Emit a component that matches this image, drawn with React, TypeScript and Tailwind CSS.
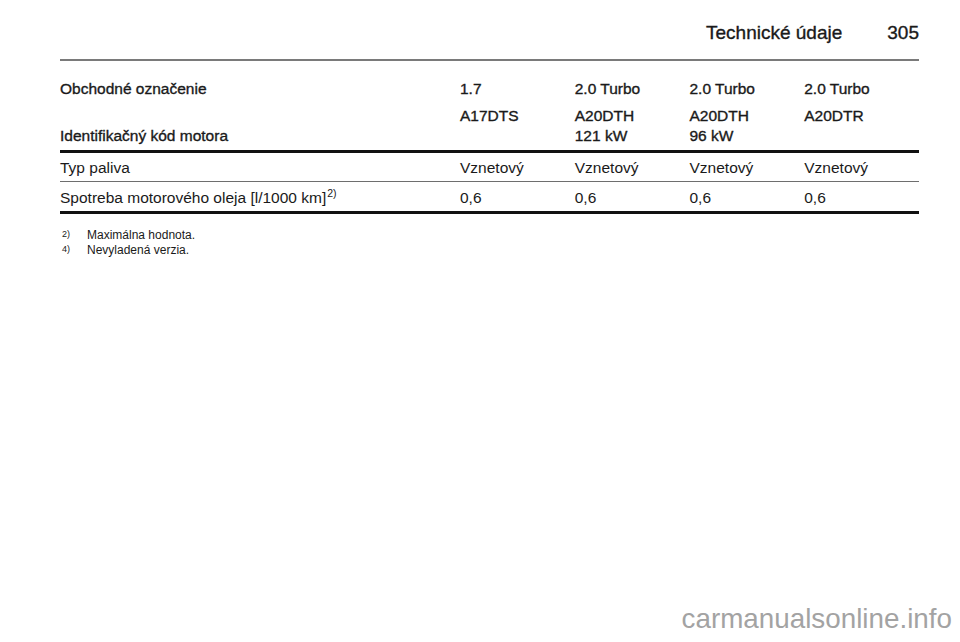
const columns = [
  { name: '1.7', code: ['A17DTS'], fuel: 'Vznetový', oil: '0,6' },
  { name: '2.0 Turbo', code: ['A20DTH', '121 kW'], fuel: 'Vznetový', oil: '0,6' },
  { name: '2.0 Turbo', code: ['A20DTH', '96 kW'], fuel: 'Vznetový', oil: '0,6' },
  { name: '2.0 Turbo', code: ['A20DTR'], fuel: 'Vznetový', oil: '0,6' },
];

const footnotes = [
  { mark: '2)', text: 'Maximálna hodnota.' },
  { mark: '4)', text: 'Nevyladená verzia.' },
];

const bold = '[-webkit-text-stroke:0.35px_#1a1a1a]';

export default function App() {
  return (
    <div
      className="flex flex-col h-[642px] w-[960px] bg-white text-[#1a1a1a] overflow-hidden"
      style={{ fontFamily: '"Liberation Sans", Arial, sans-serif' }}
    >
      <div className="pl-[60px] pr-[41px]">
        {/* page header */}
        <div className={`flex justify-end items-center pt-[21px] h-[45px] text-[19px] leading-[24px] ${bold}`}>
          <span>Technické údaje</span>
          <span className="ml-[45px]">305</span>
        </div>
        <div className="mt-[14px] h-[1.5px] bg-[#7a7a7a]" />

        {/* table */}
        <div className="text-[15.5px] leading-[20px]">
          <div className={`grid grid-cols-[400px_repeat(4,1fr)] pt-[18px] ${bold}`}>
            <div>Obchodné označenie</div>
            {columns.map((c, i) => (
              <div key={i}>{c.name}</div>
            ))}
          </div>
          <div className={`grid grid-cols-[400px_repeat(4,1fr)] pt-[7px] pb-[4px] ${bold}`}>
            <div className="self-end">Identifikačný kód motora</div>
            {columns.map((c, i) => (
              <div key={i} className="flex flex-col min-h-[40px]">
                {c.code.map((l) => (
                  <span key={l}>{l}</span>
                ))}
              </div>
            ))}
          </div>
          <div className="h-[3px] bg-[#111]" />

          <div className="grid grid-cols-[400px_repeat(4,1fr)] pt-[5px] pb-[3px]">
            <div>Typ paliva</div>
            {columns.map((c, i) => (
              <div key={i}>{c.fuel}</div>
            ))}
          </div>
          <div className="h-px bg-[#6e6e6e]" />

          <div className="grid grid-cols-[400px_repeat(4,1fr)] pt-[6px] pb-[3px]">
            <div>
              Spotreba motorového oleja [l/1000 km]
              <sup className="text-[10.5px] ml-px relative -top-[6px]">2)</sup>
            </div>
            {columns.map((c, i) => (
              <div key={i}>{c.oil}</div>
            ))}
          </div>
          <div className="h-[3px] bg-[#111]" />
        </div>

        {/* footnotes */}
        <div className="pt-[14px] text-[12px] leading-[15px]">
          {footnotes.map((f) => (
            <div key={f.mark} className="flex">
              <span className="w-[27px] text-[9px] leading-[12px] pl-[2px]">{f.mark}</span>
              <span>{f.text}</span>
            </div>
          ))}
        </div>
      </div>

      <div className="mt-auto self-end pr-[8px] pb-[7px] text-[27.8px] leading-[32px] text-[#a3a3a3]">
        carmanualsonline.info
      </div>
    </div>
  );
}
